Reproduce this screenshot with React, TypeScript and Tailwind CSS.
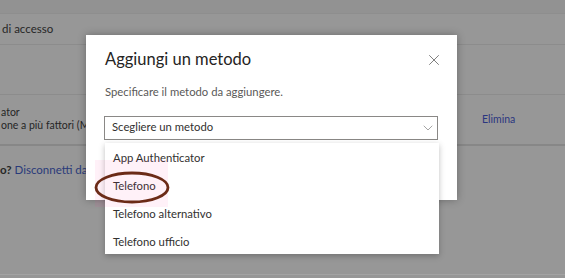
import { X, ChevronDown } from 'lucide-react';

const options = ['App Authenticator', 'Telefono', 'Telefono alternativo', 'Telefono ufficio'];

export default function App() {
  return (
    <div className="relative w-[565px] h-[278px] overflow-hidden bg-[#979797] font-['Lato',sans-serif] text-[#262626]">
      {/* Dimmed page behind the dialog */}
      <div className="h-[14px] bg-[#929292] border-b border-[#8e8e8e]" />
      <div className="h-[31px] flex items-center pl-[2px] text-[11.5px] border-b border-[#8c8c8c]">di accesso</div>
      <div className="h-[50px] border-b border-[#8c8c8c]" />
      <div className="h-[51px] flex items-center border-b-2 border-[#878787]">
        <div className="flex-1 text-[10.5px] leading-[13px] -mt-[2px] pl-[1px]">
          <div>ator</div>
          <div>one a più fattori (MFA)</div>
        </div>
        <div className="w-[83px] text-[10.5px] text-[#2b3680]">Elimina</div>
      </div>
      <div className="h-[47px] flex items-center text-[11.5px]">
        <span className="font-bold">o?</span>
        <span className="ml-[3px] text-[#2a3a7a]">Disconnetti da tutto</span>
      </div>
      <div className="h-[82px] border-b border-[#a3a3a3]" />

      {/* Dialog */}
      <div className="absolute left-[86px] top-[35px] w-[371px] h-[165px] bg-white shadow-[0_0_8px_rgba(0,0,0,0.3)] px-[19px]">
        <div className="flex items-center justify-between h-[48px] pt-[1px]">
          <h2 className="text-[16.5px] text-[#252423]">Aggiungi un metodo</h2>
          <X className="w-[18px] h-[18px] text-[#555] -mr-[5px]" strokeWidth={1} />
        </div>
        <p className="mt-[1px] text-[11.3px] text-[#5a5958]">Specificare il metodo da aggiungere.</p>
        <div className="mt-[15px] -ml-[1px] w-[334px] h-[24px] border border-[#8a8886] flex items-center justify-between pl-[7px] pr-[1px] text-[11.3px] text-[#323130]">
          <span>Scegliere un metodo</span>
          <ChevronDown className="w-[16px] h-[16px] text-[#777]" strokeWidth={1} />
        </div>
      </div>

      {/* Open dropdown list */}
      <div className="absolute left-[105px] top-[143px] w-[334px] h-[111px] bg-white shadow-[0_2px_6px_rgba(0,0,0,0.25)] pt-[1px] overflow-hidden">
        {options.map((o) => (
          <div key={o} className="h-[28px] flex items-center pl-[8px] text-[11.3px] text-[#323130]">
            {o}
          </div>
        ))}
      </div>

      {/* Annotation */}
      <div className="absolute left-[95px] top-[160px] w-[73px] h-[47px] bg-[#ff3399]/[0.07]" />
      <svg className="absolute left-[94px] top-[171px]" width="76" height="33" viewBox="0 0 76 33">
        <ellipse cx="38" cy="16.5" rx="36" ry="14.5" fill="none" stroke="#6b2b17" strokeWidth="2.8" />
      </svg>
    </div>
  );
}
